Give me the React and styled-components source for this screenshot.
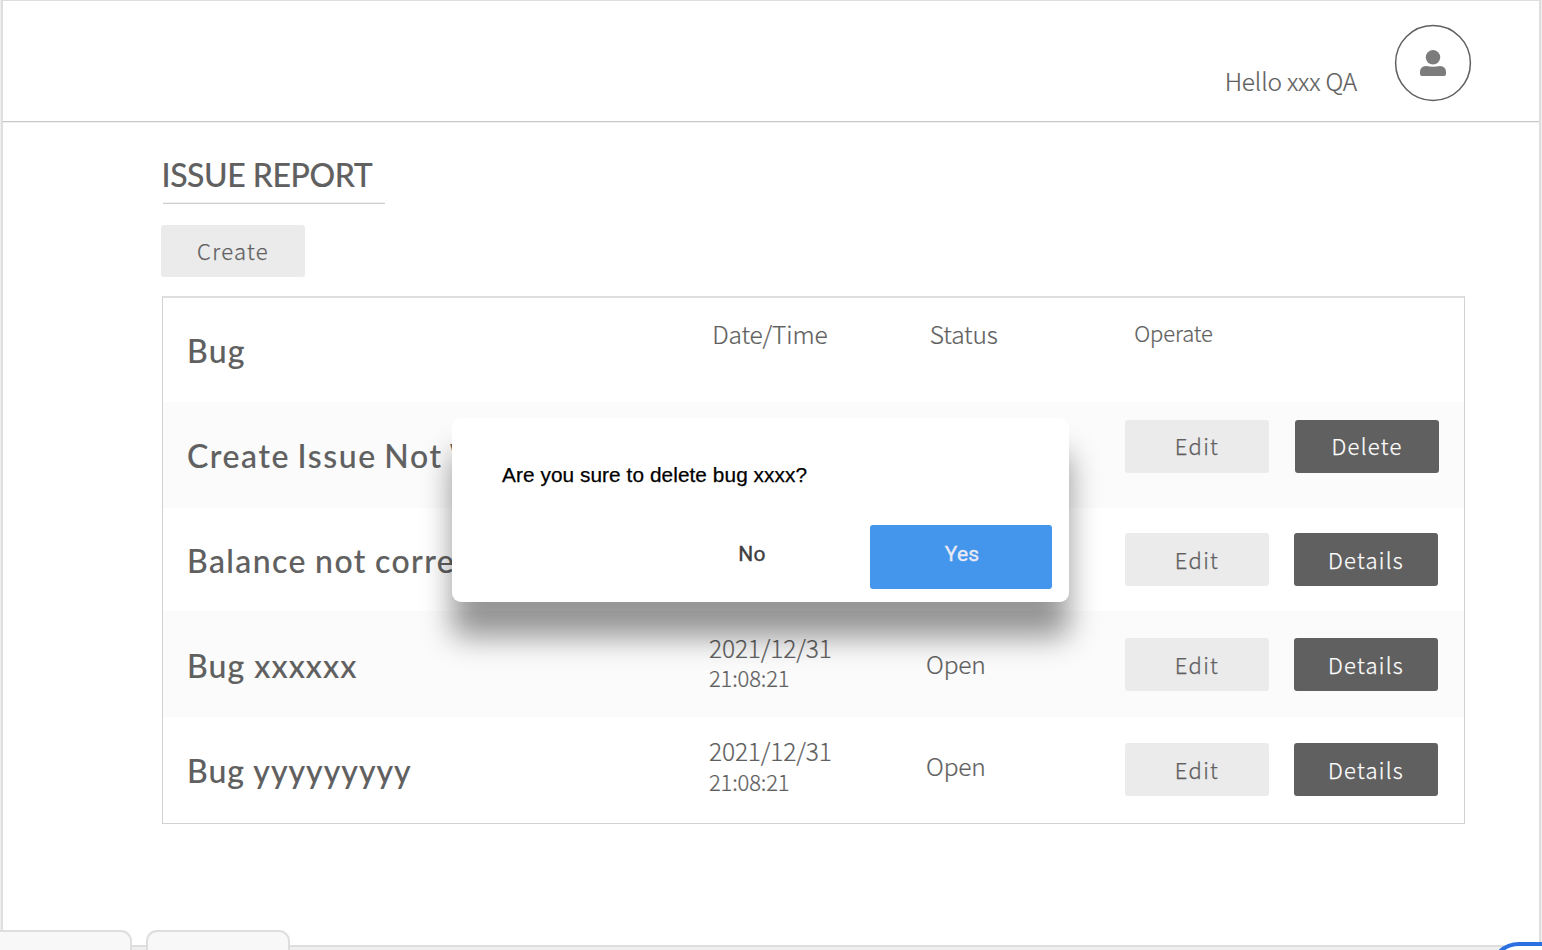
import React from "react";
import styled, { createGlobalStyle } from "styled-components";

const GlobalStyle = createGlobalStyle`
  * { box-sizing: border-box; }
  html, body { margin: 0; padding: 0; background: #fff; overflow: hidden; }
`;

const sans = `"Noto Sans CJK SC", "Noto Sans", sans-serif`;

const Canvas = styled.div`
  position: relative;
  width: 1542px;
  height: 950px;
  padding-left: 1px;
  background: #efefef;
  overflow: hidden;
`;

const Frame = styled.div`
  width: 1540px;
  height: 947px;
  border: 2px solid #dedede;
  border-top-width: 1px;
  background: #fff;
`;

const Header = styled.header`
  display: flex;
  justify-content: flex-end;
  height: 121px;
  padding: 23px 67px 0 0;
  border-bottom: 1px solid #c8c8c8;
  box-shadow: 0 1px 0 #efefef;
`;

const Greeting = styled.span`
  margin: 37px 37px 0 0;
  height: 40px;
  font: 300 24.5px/40px ${sans};
  letter-spacing: -0.2px;
  color: #606060;
  -webkit-text-stroke: 0.2px #606060;
  white-space: nowrap;
`;

const Avatar = styled.svg`
  width: 78px;
  height: 78px;
`;

const Main = styled.main`
  display: flex;
  flex-direction: column;
  align-items: flex-start;
  padding: 32px 0 0 158px;
`;

const Title = styled.h1`
  width: 222px;
  height: 50px;
  margin: 0 0 21px 2px;
  padding-top: 1px;
  border-bottom: 1px solid #d0d0d0;
  box-shadow: 0 -1px 0 #f0f0f0 inset;
  font: 500 32px/40px Lato, sans-serif;
  letter-spacing: -0.45px;
  color: #606060;
  -webkit-text-stroke: 0.1px #606060;
  white-space: nowrap;
  text-indent: -1.5px;
`;

const Button = styled.button`
  width: 144px;
  height: ${(p) => p.$height || 53}px;
  padding: 0 0 ${(p) => p.$lift || 0}px;
  border: 0;
  border-radius: 3px;
  background: ${(p) => (p.$dark ? "#606060" : "#ebebeb")};
  color: ${(p) => (p.$dark ? "#fff" : "#606060")};
  font: 300 22px/50px ${sans};
  letter-spacing: 1.3px;
  -webkit-text-stroke: 0.25px ${(p) => (p.$dark ? "#fff" : "#606060")};
`;

const Table = styled.section`
  width: 1303px;
  height: 528px;
  margin: 19px 0 0 1px;
  border: 1px solid #d2d2d2;
  border-top: 2px solid #dedede;
`;

const Row = styled.div`
  display: grid;
  grid-template-columns: 522px 217px 199px 1fr;
  height: ${(p) => p.$height}px;
  padding-left: 24px;
  background: ${(p) => (p.$shaded ? "#fbfbfb" : "#fff")};
`;

const Name = styled.span`
  padding-top: ${(p) => p.$top}px;
  font: 500 32px/40px Lato, sans-serif;
  letter-spacing: ${(p) => p.$spacing || 1.35}px;
  word-spacing: ${(p) => p.$words || 0}px;
  color: #606060;
  -webkit-text-stroke: 0.1px #606060;
  white-space: nowrap;
`;

const Cell = styled.div`
  display: flex;
  flex-direction: column;
  padding: ${(p) => p.$top}px 0 0 ${(p) => p.$left || 0}px;
  color: #606060;
`;

const Label = styled.span`
  height: ${(p) => p.$line || 30}px;
  font: 300 ${(p) => p.$size || 24.5}px/30px ${sans};
  letter-spacing: -0.15px;
  -webkit-text-stroke: 0.2px #606060;
  white-space: nowrap;
`;

const Actions = styled.div`
  display: flex;
  align-items: flex-start;
  gap: ${(p) => p.$gap || 25}px;
  padding-top: ${(p) => p.$top}px;
`;

const Dialog = styled.div`
  position: absolute;
  left: 452px;
  top: 418px;
  width: 616.5px;
  height: 183.5px;
  padding: 42px 16.5px 0 50px;
  border-radius: 9px;
  background: #fff;
  box-shadow: 0 35px 30px rgba(0, 0, 0, 0.41);
`;

const Message = styled.p`
  margin: 0 0 35px;
  font: 400 20.8px/30px "Liberation Sans", Arial, sans-serif;
  letter-spacing: 0.07px;
  color: #000;
  -webkit-text-stroke: 0.25px #000;
  white-space: nowrap;
`;

const DialogActions = styled.div`
  display: flex;
  justify-content: flex-end;
  gap: 28px;
`;

const DialogButton = styled.button`
  width: 182px;
  height: 64px;
  padding: 0 0 7px 2px;
  border: 0;
  border-radius: 3px;
  background: ${(p) => (p.$primary ? "#4496ec" : "transparent")};
  color: ${(p) => (p.$primary ? "#e9eaf6" : "#404040")};
  font: 400 21px/40px Roboto, sans-serif;
  letter-spacing: 0.2px;
  -webkit-text-stroke: 0.35px currentColor;
`;

const TabBar = styled.nav`
  position: absolute;
  left: -12px;
  bottom: -12px;
  display: flex;
  gap: 14px;
`;

const Tab = styled.div`
  width: ${(p) => p.$width}px;
  height: 32px;
  border: 2px solid #dedede;
  border-radius: 11px;
  background: #f8f8f8;
`;

const Bubble = styled.div`
  position: absolute;
  left: 1489px;
  top: 942px;
  width: 100px;
  height: 70px;
  border: 4px solid #2a70e0;
  border-radius: 30px;
  background: #fff;
`;

const rows = [
  { name: "Create Issue Not Working", height: 106.5, nameTop: 34, spacing: 1.6, words: -2.2, actionTop: 18, lift: 2, gap: 26, action: "Delete", shaded: true },
  { name: "Balance not correct", height: 103, nameTop: 32.5, spacing: 1.4, words: -1.2, actionTop: 24.5, action: "Details" },
  { name: "Bug xxxxxx", height: 106, nameTop: 34.5, spacing: 1.05, actionTop: 26.5, action: "Details", shaded: true, timeTop: 22, timeLine: 29, statusTop: 38 },
  { name: "Bug yyyyyyyyy", height: 106, nameTop: 33.5, spacing: 1, actionTop: 25.5, action: "Details", timeTop: 19, timeLine: 30, statusTop: 34 },
];

export default function App() {
  return (
    <Canvas>
      <GlobalStyle />
      <Frame>
        <Header>
          <Greeting>Hello xxx QA</Greeting>
          <Avatar viewBox="0 0 78 78">
            <circle cx="39" cy="39" r="37.4" fill="none" stroke="#606060" strokeWidth="1.5" />
            <g transform="translate(26 26)" fill="#7c7c7c">
              <circle cx="13" cy="7.3" r="7.2" />
              <path d="M6 16 Q13 17.6 20 16 Q26 16 26 22.5 V24 Q26 26 24 26 H2 Q0 26 0 24 V22.5 Q0 16 6 16Z" />
            </g>
          </Avatar>
        </Header>
        <Main>
          <Title>ISSUE REPORT</Title>
          <Button $height={52} $lift={2}>Create</Button>
          <Table>
            <Row $height={103.5}>
              <Name $top={32.5} $spacing={1.2}>Bug</Name>
              <Cell $top={21} $left={3.2}><Label>Date/Time</Label></Cell>
              <Cell $top={21} $left={3.8}><Label>Status</Label></Cell>
              <Cell $top={19} $left={9.3}><Label $size={22}>Operate</Label></Cell>
            </Row>
            {rows.map((r) => (
              <Row key={r.name} $height={r.height} $shaded={r.shaded}>
                <Name $top={r.nameTop} $spacing={r.spacing} $words={r.words}>{r.name}</Name>
                <Cell $top={r.timeTop}>
                  {r.timeTop && (
                    <>
                      <Label $line={r.timeLine}>2021/12/31</Label>
                      <Label $size={22}>21:08:21</Label>
                    </>
                  )}
                </Cell>
                <Cell $top={r.statusTop}>{r.statusTop && <Label>Open</Label>}</Cell>
                <Actions $top={r.actionTop} $gap={r.gap}>
                  <Button $lift={r.lift}>Edit</Button>
                  <Button $lift={r.lift} $dark>{r.action}</Button>
                </Actions>
              </Row>
            ))}
          </Table>
        </Main>
      </Frame>
      <Dialog role="dialog">
        <Message>Are you sure to delete bug xxxx?</Message>
        <DialogActions>
          <DialogButton>No</DialogButton>
          <DialogButton $primary>Yes</DialogButton>
        </DialogActions>
      </Dialog>
      <TabBar>
        <Tab $width={144} />
        <Tab $width={144} />
      </TabBar>
      <Bubble />
    </Canvas>
  );
}
